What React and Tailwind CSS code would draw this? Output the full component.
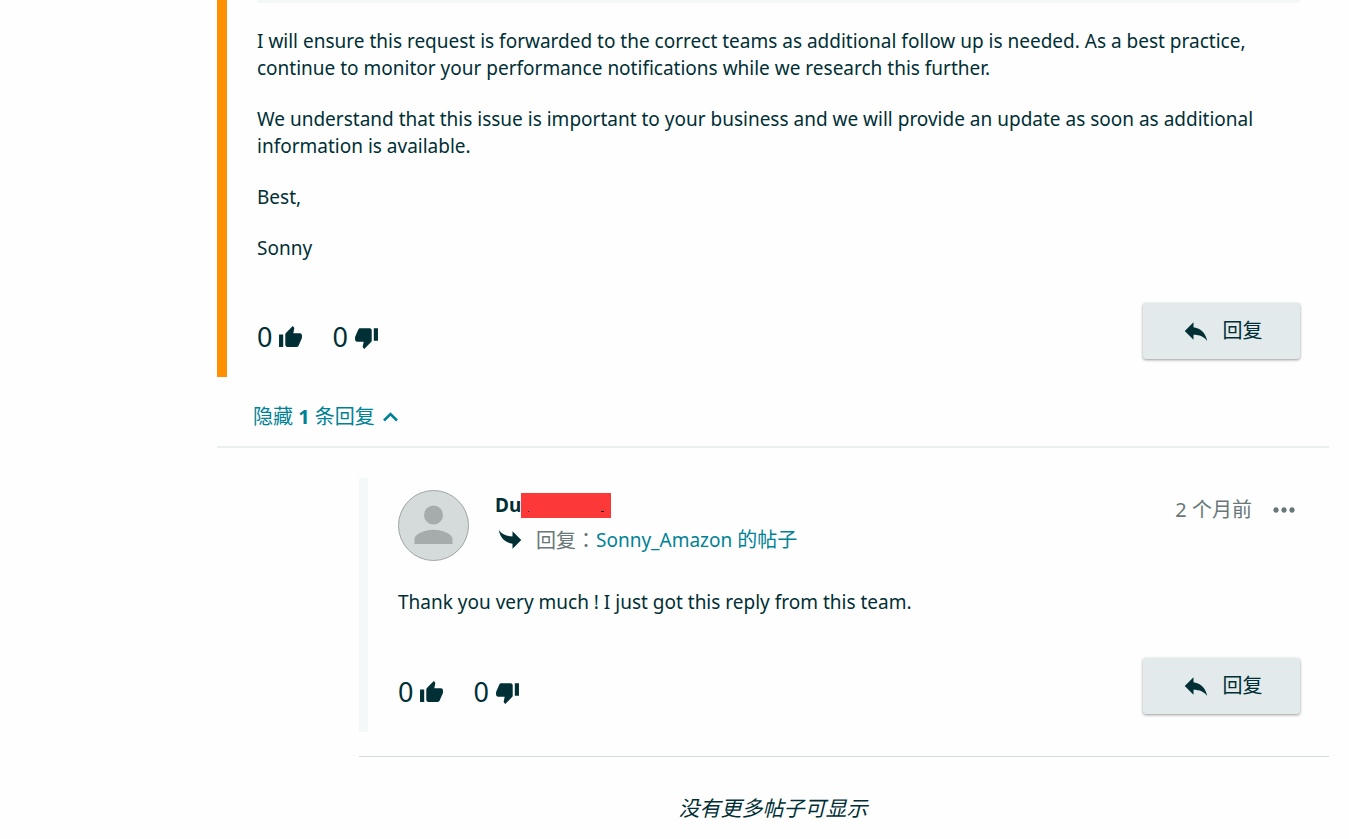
import { MdMoreHoriz, MdReply, MdThumbDown, MdThumbUp } from "react-icons/md";

function Avatar() {
  return (
    <svg width="71" height="71" viewBox="0 0 71 71" className="shrink-0">
      <circle cx="35.5" cy="35.5" r="35" fill="#d5dbdb" stroke="#9fa5a5" />
      <circle cx="35.5" cy="25" r="9.5" fill="#a6abab" />
      <path d="M16.5 54v-4.7c0-6.4 12.7-9.6 19-9.6s19 3.2 19 9.6V54z" fill="#a6abab" />
    </svg>
  );
}

function VoteButton({ label, count, icon: Icon }) {
  return (
    <button type="button" aria-label={label} className="flex items-center gap-1.5 text-[27px] leading-8">
      {count}
      <Icon size={25} />
    </button>
  );
}

function PostActions() {
  return (
    <div className="flex items-start justify-between">
      <div className="flex gap-[29px] pt-[18px]">
        <VoteButton label="Like" count={0} icon={MdThumbUp} />
        <VoteButton label="Dislike" count={0} icon={MdThumbDown} />
      </div>
      <button
        type="button"
        className="flex h-[56px] w-[157px] items-center justify-center gap-3 rounded-[3px] bg-[#e2eaeb] text-xl shadow-[0_1px_3px_rgba(0,0,0,0.4)]"
      >
        <MdReply size={30} />
        <span>回复</span>
      </button>
    </div>
  );
}

function StaffPost() {
  return (
    <article className="border-l-10 border-[#ff9000] pr-[29px] pb-[18px] pl-[30px]">
      <div className="h-[3px] bg-[#f5f8f8]" />
      <div className="flex flex-col gap-6 pt-[25px] pb-[41px] text-[19px] leading-[27px]">
        <p>
          I will ensure this request is forwarded to the correct teams as additional follow up is needed. As a best practice,
          <br />
          continue to monitor your performance notifications while we research this further.
        </p>
        <p>
          We understand that this issue is important to your business and we will provide an update as soon as additional
          <br />
          information is available.
        </p>
        <p>Best,</p>
        <p>Sonny</p>
      </div>
      <PostActions />
    </article>
  );
}

function ReplyPost() {
  return (
    <article className="border-l-9 border-[#f4f8f9] pt-3 pr-[29px] pb-[18px] pl-[30px]">
      <header className="flex">
        <Avatar />
        <div className="ml-[26px] flex flex-1 flex-col gap-1.5 text-[20px] leading-[27px]">
          <div className="flex items-center pt-0.5">
            <strong className="text-[19px] leading-[27px]">Du</strong>
            <span className="flex h-[25px] w-[90px] items-end justify-between bg-[#fc3838] px-[7px] pb-[6px]">
              <span className="h-px w-px bg-[#002f36]" />
              <span className="h-px w-[3px] bg-[#002f36]" />
            </span>
          </div>
          <div className="flex items-center">
            <MdReply size={30} className="mr-[11px] rotate-180" />
            <span className="text-[#687778]">
              回复<span className="font-['Noto_Sans_CJK_TC',sans-serif]">：</span>
            </span>
            <a href="#post" className="text-[#008296]">
              <span className="text-[19px]">Sonny_Amazon </span>的帖子
            </a>
          </div>
        </div>
        <div className="flex h-10 items-center gap-4 text-[20px] text-[#687778]">
          <time>2 个月前</time>
          <button type="button" aria-label="More">
            <MdMoreHoriz size={32} />
          </button>
        </div>
      </header>
      <p className="pt-[28px] pb-[42px] text-[19px] leading-[27px]">
        Thank you very much ! I just got this reply from this team.
      </p>
      <PostActions />
    </article>
  );
}

export default function App() {
  return (
    <main className="min-h-screen bg-[#fefefe] pr-5 pl-[217px] font-['Noto_Sans','Noto_Sans_CJK_SC',sans-serif] text-[#002f36]">
      <StaffPost />
      <div className="border-b-2 border-[#e9eeee] pt-[26px] pb-4 pl-9">
        <button type="button" className="flex items-center gap-2 text-[20px] leading-[27px] text-[#008296]">
          <span>
            隐藏 <b>1</b> 条回复
          </span>
          <svg width="15" height="10" viewBox="0 0 15 10" fill="none" stroke="currentColor" strokeWidth="2.6">
            <path d="M1 8.5l6.5-6.5L14 8.5" />
          </svg>
        </button>
      </div>
      <section className="mt-[30px] ml-[142px] border-b border-[#d5dbdb] pb-6">
        <ReplyPost />
      </section>
      <p className="pt-[38px] pb-4 text-center text-[21px] leading-[27px] italic">没有更多帖子可显示</p>
    </main>
  );
}
